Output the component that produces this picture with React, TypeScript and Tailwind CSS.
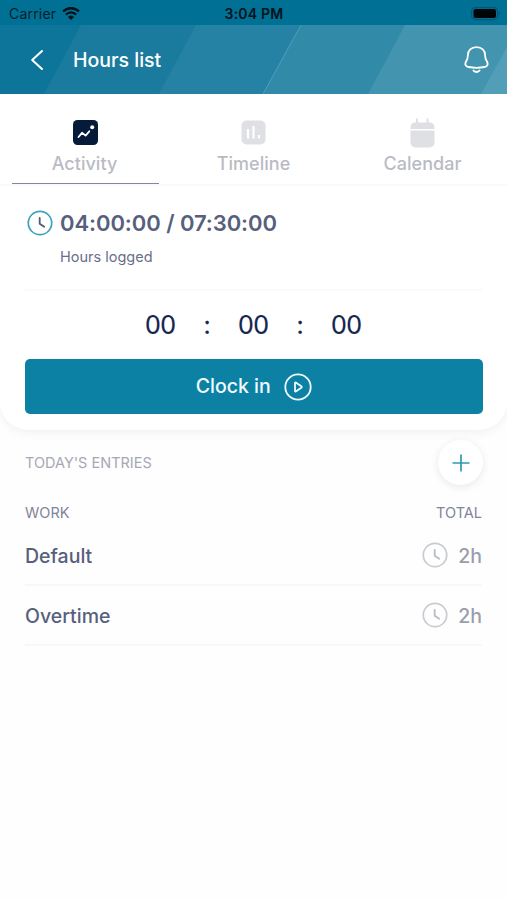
import type { ReactNode } from "react";

const tabs = [
  { label: "Activity", icon: <ActivityIcon />, active: true },
  { label: "Timeline", icon: <TimelineIcon />, active: false },
  { label: "Calendar", icon: <CalendarIcon />, active: false },
];

const entries = [
  { name: "Default", total: "2h" },
  { name: "Overtime", total: "2h" },
];

function ActivityIcon() {
  return (
    <svg className="w-[25px] h-[25px] ml-[1px]" viewBox="0 0 25 25" fill="none">
      <rect width="25" height="25" rx="4.5" fill="#061a3a" />
      <path
        d="M5.5 17L9 12.8L12.6 15.6L16.3 11.3"
        stroke="white"
        strokeWidth="1.8"
        strokeLinecap="round"
        strokeLinejoin="round"
      />
      <circle cx="19.2" cy="7.3" r="2" fill="white" />
    </svg>
  );
}

function TimelineIcon() {
  return (
    <svg className="w-[25px] h-[25px]" viewBox="0 0 25 25" fill="none">
      <rect x="0.5" y="0.5" width="24" height="24" rx="5" fill="#dfe0e3" />
      <path
        d="M7 9V18.5M12.5 6V18.5M18 15V18.5"
        stroke="white"
        strokeWidth="2.2"
      />
    </svg>
  );
}

function CalendarIcon() {
  return (
    <svg className="w-[25px] h-[30px]" viewBox="0 0 25 30" fill="none">
      <path d="M7 0.5V6M17.5 0.5V6" stroke="#dfe0e3" strokeWidth="2" />
      <path d="M0.5 11V9a4.5 4.5 0 0 1 4.5-4.5h15A4.5 4.5 0 0 1 24.5 9v2z" fill="#dfe0e3" />
      <path d="M0.5 12.5h24V24.5a5 5 0 0 1-5 5h-14a5 5 0 0 1-5-5z" fill="#dfe0e3" />
    </svg>
  );
}

function ClockIcon({ ring, hands }: { ring: string; hands: string }) {
  return (
    <svg className="w-[26px] h-[26px] shrink-0" viewBox="0 0 26 26" fill="none">
      <circle cx="13" cy="13" r="11.7" stroke={ring} strokeWidth="1.7" />
      <path
        d="M12.7 8V13.8L17.2 16.8"
        stroke={hands}
        strokeWidth="1.8"
        strokeLinecap="round"
        strokeLinejoin="round"
      />
    </svg>
  );
}

function StatusBar() {
  return (
    <div className="grid grid-cols-3 items-center h-[25px] pt-[2px] pl-[9px] pr-[6px] bg-[#007095] text-[#04202c] text-[14px] tracking-[0.2px]">
      <div className="flex items-center gap-[6px]">
        <span>Carrier</span>
        <svg className="w-[18px] h-[13px]" viewBox="0 0 18 13" fill="none">
          <path d="M1 4.4Q9-2.2 17 4.4" stroke="#04131b" strokeWidth="2.5" />
          <path d="M3.8 7.6Q9 3.2 14.2 7.6" stroke="#04131b" strokeWidth="2.3" />
          <path d="M6 9.9Q9 7.3 12 9.9L9 13z" fill="#04131b" />
        </svg>
      </div>
      <span className="text-center font-semibold text-[#04131b] whitespace-nowrap -ml-[2px]">
        3:04 PM
      </span>
      <svg className="justify-self-end w-[30px] h-[14px]" viewBox="0 0 30 14" fill="none">
        <rect x="0.6" y="0.6" width="26" height="12" rx="4" stroke="#045674" strokeWidth="1.2" />
        <rect x="2.5" y="2" width="22.5" height="9" rx="2.2" fill="#000508" />
        <path d="M28 4.6v3.8c1.4-.6 1.4-3.2 0-3.8z" fill="#045674" />
      </svg>
    </div>
  );
}

function Header() {
  return (
    <header className="relative h-[69px] bg-[#0d7599] text-white">
      <svg className="absolute inset-0 w-full h-full" viewBox="0 0 507 69">
        <path d="M81 0H507V69H44z" fill="#1b7b9e" />
        <path d="M196 0H507V69H159z" fill="#2682a4" />
        <path d="M301 0H507V69H263z" fill="#328aa9" />
        <path d="M405 0H507V69H368z" fill="#4294af" />
        <path d="M507 22V69H481z" fill="#529db7" />
        <path d="M301 0L263 69" stroke="#4d9fb9" strokeWidth="1" />
      </svg>
      <div className="relative flex items-center h-full pl-[30px] pr-[18px]">
        <svg className="w-[14px] h-[22px]" viewBox="0 0 14 22" fill="none">
          <path
            d="M12 2L2.2 11L12 20"
            stroke="white"
            strokeWidth="2"
            strokeLinecap="round"
            strokeLinejoin="round"
          />
        </svg>
        <h1 className="ml-[29px] text-[19.5px] leading-6 font-medium">Hours list</h1>
        <svg className="ml-auto w-[25px] h-[28px]" viewBox="0 0 25 28" fill="none">
          <path
            d="M12.5 1.2C7.2 1.2 3.9 4.6 3.9 9.2C3.9 12.4 3.6 13.3 2.2 15.3C0.5 18.2 1.4 20.4 4.5 21C9 21.9 16 21.9 20.5 21C23.6 20.4 24.5 18.2 22.8 15.3C21.4 13.3 21.1 12.4 21.1 9.2C21.1 4.6 17.8 1.2 12.5 1.2Z"
            stroke="white"
            strokeWidth="1.8"
          />
          <path d="M9.5 24.6Q12.5 27.2 15.5 24.6" stroke="white" strokeWidth="1.9" strokeLinecap="round" />
        </svg>
      </div>
    </header>
  );
}

function Tab({ label, icon, active }: { label: string; icon: ReactNode; active: boolean }) {
  return (
    <button className="relative flex flex-col items-center h-[90px] pt-[24px]">
      <span className="flex items-center justify-center h-[29px]">{icon}</span>
      <span className="mt-[5px] text-[18px] leading-6 font-medium tracking-[0.02px] text-[#b9bbc4]">
        {label}
      </span>
      {active && (
        <span className="absolute bottom-0 left-3 right-[10.5px] h-[1.5px] bg-[#8587a0]"></span>
      )}
    </button>
  );
}

export default function App() {
  return (
    <div className="min-h-[900px] bg-[#fefefe] font-['Inter',sans-serif] text-[#56607d]">
      <StatusBar />
      <Header />

      <main>
        <section className="h-[336px] bg-white rounded-b-[28px] shadow-[0_3px_10px_rgba(0,0,0,0.05)]">
          <nav className="grid grid-cols-3 border-b-2 border-[#fafafa]">
            {tabs.map((tab) => (
              <Tab key={tab.label} {...tab} />
            ))}
          </nav>

          <div className="mx-[25px] h-[105px] pt-[24px] border-b-2 border-[#fafafa]">
            <div className="flex items-center gap-[7px] pl-[2px]">
              <ClockIcon ring="#3ba3bd" hands="#505a78" />
              <span className="text-[22px] leading-[26px] font-semibold tracking-[-0.07px] whitespace-nowrap">
                04:00:00 / 07:30:00
              </span>
            </div>
            <p className="mt-[11px] ml-[35px] text-[14.5px] leading-5 text-[#686f88]">Hours logged</p>
          </div>

          <div className="flex justify-center items-center h-[68px] pt-[2px] text-[25px] text-[#14264f] [-webkit-text-stroke:0.2px_#14264f]">
            <span className="w-[31px] tracking-[-0.5px]">00</span>
            <span className="w-[62px] text-center">:</span>
            <span className="w-[31px] tracking-[-0.5px]">00</span>
            <span className="w-[62px] text-center">:</span>
            <span className="w-[31px] tracking-[-0.5px]">00</span>
          </div>

          <button className="flex items-center justify-center gap-[13px] mx-[25px] w-[457.5px] h-[55px] rounded-[5px] bg-[#0d81a4] text-[#effbff]">
            <span className="text-[19.5px] font-medium">Clock in</span>
            <svg className="w-[28px] h-[28px]" viewBox="0 0 28 28" fill="none">
              <circle cx="14" cy="14" r="12.7" stroke="currentColor" strokeWidth="1.8" />
              <path
                d="M11 10V18Q11 18.8 11.8 18.4L17.3 14.7Q18.2 14 17.3 13.3L11.8 9.6Q11 9.2 11 10Z"
                stroke="currentColor"
                strokeWidth="1.8"
                strokeLinejoin="round"
              />
            </svg>
          </button>
        </section>

        <section className="px-[25px] pt-[10px]">
          <div className="flex items-center justify-between">
            <h2 className="text-[14.5px] leading-5 text-[#a6a8b4]">TODAY'S ENTRIES</h2>
            <button className="flex items-center justify-center w-[45px] h-[45px] -mr-[1px] rounded-full bg-white shadow-[0_2px_8px_rgba(0,0,0,0.09)]">
              <svg className="w-[18px] h-[18px]" viewBox="0 0 18 18">
                <path d="M9 0.5V17.5M0.5 9H17.5" stroke="#3299b5" strokeWidth="1.7" />
              </svg>
            </button>
          </div>

          <div className="flex justify-between mt-[18px] text-[14.5px] leading-5 text-[#81849a]">
            <span>WORK</span>
            <span>TOTAL</span>
          </div>

          <ul className="mt-[3px]">
            {entries.map((entry) => (
              <li
                key={entry.name}
                className="flex items-center justify-between h-[60px] border-b-2 border-[#f8f8f9]"
              >
                <span className="pt-[3px] text-[19.5px] font-medium">{entry.name}</span>
                <span className="flex items-center gap-[10px] text-[19.5px] font-medium text-[#999dac]">
                  <ClockIcon ring="#c8cbd2" hands="#b8bbc5" />
                  <span className="pt-[3px]">{entry.total}</span>
                </span>
              </li>
            ))}
          </ul>
        </section>
      </main>
    </div>
  );
}
